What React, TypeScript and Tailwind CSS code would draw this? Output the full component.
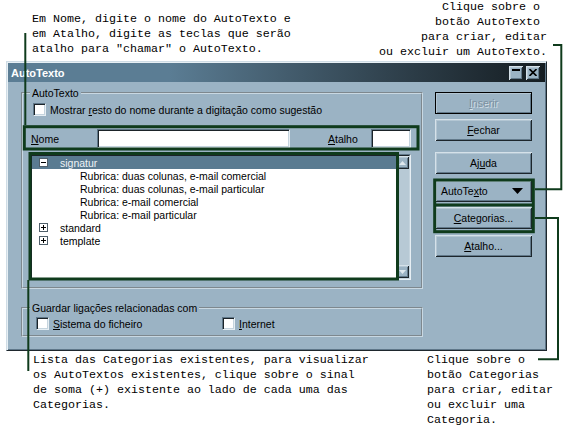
const raised =
  'bg-[#9bb3c4] shadow-[inset_1px_1px_0_#d5e1e9,inset_-1px_-1px_0_#1d262c,inset_2px_2px_0_#b3c6d3,inset_-2px_-2px_0_#62798a]'

function U({ children }: { children: React.ReactNode }) {
  return <span className="underline decoration-1 underline-offset-[1px]">{children}</span>
}

function Checkbox() {
  return (
    <span className="block h-[13px] w-[13px] shrink-0 border border-t-[#5f7789] border-l-[#5f7789] border-r-[#e6eef3] border-b-[#e6eef3] bg-white shadow-[inset_1px_1px_0_#1b2328,inset_-1px_-1px_0_#c5d4de]" />
  )
}

function TextInput({ className }: { className: string }) {
  return (
    <div
      className={`h-[19px] border border-t-[#5f7789] border-l-[#5f7789] border-r-[#e6eef3] border-b-[#e6eef3] bg-white shadow-[inset_1px_1px_0_#1b2328,inset_-1px_-1px_0_#c5d4de] ${className}`}
    />
  )
}

function TreeBox({ open }: { open?: boolean }) {
  return (
    <span className="relative block h-[9px] w-[9px] border border-[#4f5f6a] bg-white">
      <span className="absolute left-[1px] top-[3px] h-[1px] w-[5px] bg-black" />
      {!open && <span className="absolute left-[3px] top-[1px] h-[5px] w-[1px] bg-black" />}
    </span>
  )
}

function Button({
  children,
  className = '',
  outline,
}: {
  children: React.ReactNode
  className?: string
  outline?: boolean
}) {
  return (
    <div
      className={`flex h-[22px] items-center justify-center ${raised} ${
        outline ? 'outline outline-1 -outline-offset-1 outline-black' : ''
      } ${className}`}
    >
      {children}
    </div>
  )
}

const children = [
  'Rubrica: duas colunas, e-mail comercial',
  'Rubrica: duas colunas, e-mail particular',
  'Rubrica: e-mail comercial',
  'Rubrica: e-mail particular',
]

function TreeList() {
  return (
    <div className="mt-[6px] h-[126px] w-[381px] border border-t-[#5f7789] border-l-[#5f7789] border-r-[#e6eef3] border-b-[#e6eef3]">
      <div className="flex h-full border border-t-[#1b2328] border-l-[#1b2328] border-r-[#c5d4de] border-b-[#c5d4de]">
        <div className="flex-1 bg-white">
          <div className="flex h-[13px] items-center bg-[#5a7b91] pl-[7px] text-[#eef3f6]">
            <TreeBox open />
            <span className="ml-[12px]">signatur</span>
          </div>
          {children.map((c) => (
            <div key={c} className="flex h-[13px] items-center pl-[48px]">
              {c}
            </div>
          ))}
          {['standard', 'template'].map((c) => (
            <div key={c} className="flex h-[13px] items-center pl-[7px]">
              <TreeBox />
              <span className="ml-[12px]">{c}</span>
            </div>
          ))}
        </div>
        <div className="flex w-[13px] flex-col bg-[#b7c9d5]">
          <div className={`flex h-[13px] items-center justify-center ${raised}`}>
            <svg width="7" height="4" viewBox="0 0 7 4">
              <path d="M0 4 L3.5 0 L7 4 Z" fill="#dfe8ee" />
            </svg>
          </div>
          <div className="flex-1" />
          <div className={`flex h-[13px] items-center justify-center ${raised}`}>
            <svg width="7" height="4" viewBox="0 0 7 4">
              <path d="M0 0 L3.5 4 L7 0 Z" fill="#dfe8ee" />
            </svg>
          </div>
        </div>
      </div>
    </div>
  )
}

function Dialog() {
  return (
    <div className="ml-[6px] flex h-[290px] w-[541px] flex-col border border-t-[#cfdce5] border-l-[#cfdce5] border-r-[#1e272d] border-b-[#1e272d] bg-[#9bb3c4] p-[1px] font-['Liberation_Sans',Arial,sans-serif] text-[10.5px] leading-[12px] shadow-[inset_1px_1px_0_#e7eff4,inset_-1px_-1px_0_#5f7789]">
      <div className="flex h-[19px] shrink-0 items-center bg-linear-to-r from-[#5b7d94] from-30% to-[#151d22] pl-[3px] pr-[5px]">
        <span className="text-[11px] font-bold text-white">AutoTexto</span>
        <div className="ml-auto flex gap-[3px]">
          <div className={`flex h-[14px] w-[14px] justify-center pt-[3px] ${raised}`}>
            <span className="block h-[2px] w-[8px] bg-black" />
          </div>
          <div className={`flex h-[14px] w-[14px] items-center justify-center ${raised}`}>
            <svg width="8" height="7" viewBox="0 0 8 7">
              <path d="M0.5 0 L7.5 7 M7.5 0 L0.5 7" stroke="black" strokeWidth="1.6" />
            </svg>
          </div>
        </div>
      </div>

      <div className="flex flex-1 gap-[12px] px-[13px]">
        <div className="flex w-[402px] flex-col">
          <fieldset className="mt-[5px] min-w-0 border-2 border-[#c9d8e2] pb-[7px] pl-[7px] pr-[10px] [border-style:groove]">
            <legend className="px-[2px]">AutoTexto</legend>
            <div className="mt-[4px] flex h-[13px] items-center gap-[4px] pl-[3px]">
              <Checkbox />
              <span>
                Mostrar <U>r</U>esto do nome durante a digitação como sugestão
              </span>
            </div>
            <div className="mt-[13px] flex h-[19px] items-center">
              <span className="w-[67px] pl-[1px]">
                <U>N</U>ome
              </span>
              <TextInput className="w-[193px]" />
              <span className="ml-[38px] w-[43px]">
                <U>A</U>talho
              </span>
              <TextInput className="w-[40px]" />
            </div>
            <TreeList />
          </fieldset>

          <fieldset className="mt-[13px] min-w-0 border-2 border-[#c9d8e2] pb-[5px] pl-[7px] pr-[10px] [border-style:groove]">
            <legend className="px-[2px]">Guardar ligações relacionadas com</legend>
            <div className="mt-[3px] flex h-[13px] items-center pl-[6px]">
              <div className="flex w-[186px] items-center gap-[4px]">
                <Checkbox />
                <span>
                  <U>S</U>istema do ficheiro
                </span>
              </div>
              <div className="flex items-center gap-[4px]">
                <Checkbox />
                <span>
                  <U>I</U>nternet
                </span>
              </div>
            </div>
          </fieldset>
        </div>

        <div className="flex w-[97px] flex-col pt-[10px]">
          <Button outline className="text-[#7b909f] [text-shadow:1px_1px_0_#d3dfe7]">
            <U>I</U>nserir
          </Button>
          <Button className="mt-[5px]">
            <U>F</U>echar
          </Button>
          <Button className="mt-[11px]">
            Aj<U>u</U>da
          </Button>
          <Button className="mt-[6px] !justify-between pl-[6px] pr-[9px]">
            <span>
              AutoTe<U>x</U>to
            </span>
            <svg width="11" height="6" viewBox="0 0 11 6">
              <path d="M0 0 H11 L5.5 6 Z" fill="black" />
            </svg>
          </Button>
          <Button className="mt-[5px]">
            <U>C</U>ategorias...
          </Button>
          <Button className="mt-[6px]">
            <U>A</U>talho...
          </Button>
        </div>
      </div>
    </div>
  )
}

function Leaders() {
  return (
    <svg
      className="pointer-events-none absolute left-0 top-0"
      width="571"
      height="428"
      viewBox="0 0 571 428"
      fill="none"
      stroke="#0f3b1c"
    >
      <rect x="24.3" y="126.7" width="393.7" height="22.3" strokeWidth="3" />
      <rect x="30" y="153.5" width="367.5" height="125.5" strokeWidth="3" />
      <rect x="434.7" y="180" width="98.6" height="51.7" strokeWidth="3" />
      <path d="M434.7 205 H533.3" strokeWidth="3" />
      <path d="M25.3 33 V125" strokeWidth="2" />
      <path d="M28.3 280 V371" strokeWidth="2" />
      <path d="M553 45 H561.3 V189.3 H535" strokeWidth="2" />
      <path d="M535 218 H558 V359.3 H538" strokeWidth="2" />
    </svg>
  )
}

export default function App() {
  return (
    <div className="relative h-[428px] w-[571px] overflow-hidden bg-white text-black">
      <div className="flex h-[61px] items-start justify-between font-['Liberation_Mono',monospace] text-[11.67px] leading-[15px]">
        <p className="whitespace-pre pl-[32px] pt-[12px]">
          {'Em Nome, digite o nome do AutoTexto e\nem Atalho, digite as teclas que serão\natalho para "chamar" o AutoTexto.'}
        </p>
        <p className="whitespace-pre pr-[24px] text-right">
          {'Clique sobre o \nbotão AutoTexto \npara criar, editar\nou excluir um AutoTexto.'}
        </p>
      </div>

      <Dialog />

      <div className="grid grid-cols-[427px_1fr] pt-[2px] font-['Liberation_Mono',monospace] text-[11.67px] leading-[15px]">
        <p className="whitespace-pre pl-[33px]">
          {'Lista das Categorias existentes, para visualizar\nos AutoTextos existentes, clique sobre o sinal\nde soma (+) existente ao lado de cada uma das\nCategorias.'}
        </p>
        <p className="whitespace-pre">
          {'Clique sobre o\nbotão Categorias\npara criar, editar\nou excluir uma\nCategoria.'}
        </p>
      </div>

      <Leaders />
    </div>
  )
}
